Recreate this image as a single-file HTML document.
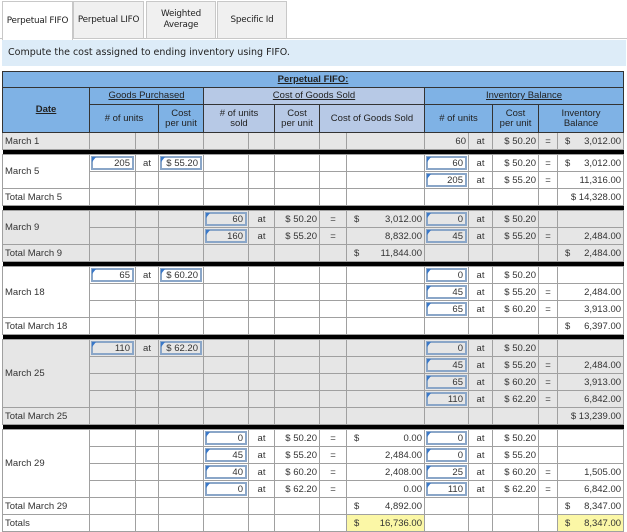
<!DOCTYPE html>
<html><head><style>
*{margin:0;padding:0;box-sizing:border-box}
body{width:627px;height:531px;background:#fff;font-family:"Liberation Sans",Arial,sans-serif;position:relative;overflow:hidden;color:#333}
.tab{position:absolute;top:1px;height:37px;border:1px solid #c8c8c8;border-bottom:none;background:#f0f0f0;font-family:"DejaVu Sans",sans-serif;font-size:8.8px;color:#222;display:flex;align-items:center;justify-content:center;text-align:center;line-height:11px;white-space:nowrap;letter-spacing:-0.2px}
.tab.act{background:#fff;height:39px;z-index:2}
.line{position:absolute;left:0;top:38px;width:627px;height:1px;background:#c8c8c8}
.instr{position:absolute;left:2px;top:40px;width:624px;height:26px;background:#ddecf8;font-family:"DejaVu Sans",sans-serif;font-size:9.5px;color:#222;padding:7px 0 0 6px}
table{position:absolute;left:2px;top:71px;border-collapse:collapse;table-layout:fixed;width:621px;font-size:9.5px}
td{border:1px solid #a0a0a0;height:17px;padding:0 2px;white-space:nowrap;overflow:hidden;position:relative}
tr.g td{background:#e6e6e6}
.h1 td,.hb{background:#7fb2e5;color:#222;text-align:center;font-weight:bold}
.hc{background:#b7c9e6!important}
.h td{text-align:center;font-weight:normal;color:#222;line-height:10px;border-color:#333}
.u{text-decoration:underline}
.r{text-align:right}
.c{text-align:center}
.bar td{height:5px;background:#000!important;border:none;padding:0}
.bl{border-left:1px solid #000!important}
.in{padding:0}
.in div{position:absolute;left:1px;right:1px;top:1px;bottom:1px;border:2px solid #8aa6c8;background:#fff;text-align:right;padding-right:2px;line-height:11px}
tr.g .in div{background:#e6e6e6}
.in div:before{content:"";position:absolute;left:-1px;top:-1px;border-top:5px solid #3a78c8;border-right:4px solid transparent}
.d{float:left;margin-left:5px}
.y{background:#fbf7a6!important}
</style></head><body>
<div class="tab act" style="left:2px;width:71px">Perpetual FIFO</div>
<div class="tab" style="left:73px;width:71px">Perpetual LIFO</div>
<div class="tab" style="left:146px;width:70px">Weighted<br>Average</div>
<div class="tab" style="left:217px;width:70px">Specific Id</div>
<div class="line"></div>
<div class="instr">Compute the cost assigned to ending inventory using FIFO.</div>
<table>
<colgroup><col style="width:87px"><col style="width:46px"><col style="width:23px"><col style="width:45px"><col style="width:45px"><col style="width:26px"><col style="width:45px"><col style="width:27px"><col style="width:78px"><col style="width:44px"><col style="width:24px"><col style="width:46px"><col style="width:19px"><col style="width:66px"></colgroup>
<tr class="h1"><td colspan="14" style="height:16px;border-color:#333"><span class="u">Perpetual FIFO:</span></td></tr>
<tr class="h"><td rowspan="2" class="hb" style="font-weight:bold"><span class="u">Date</span></td><td colspan="3" class="hb"><span class="u">Goods Purchased</span></td><td colspan="5" class="hb hc"><span class="u">Cost of Goods Sold</span></td><td colspan="5" class="hb"><span class="u">Inventory Balance</span></td></tr>
<tr class="h"><td colspan="2" class="hb" style="height:28px;font-weight:normal"># of units</td><td class="hb" style="font-weight:normal">Cost<br>per unit</td><td colspan="2" class="hb hc" style="font-weight:normal"># of units<br>sold</td><td class="hb hc" style="font-weight:normal">Cost<br>per unit</td><td colspan="2" class="hb hc" style="font-weight:normal">Cost of Goods Sold</td><td colspan="2" class="hb" style="font-weight:normal"># of units</td><td class="hb" style="font-weight:normal">Cost<br>per unit</td><td colspan="2" class="hb" style="font-weight:normal">Inventory<br>Balance</td></tr>
<tr class="g"><td>March 1</td><td class="bl"></td><td></td><td></td><td class="bl"></td><td></td><td></td><td></td><td></td><td class="r bl">60</td><td class="c">at</td><td class="r">$ 50.20</td><td class="c">=</td><td class="r"><span class="d">$</span>3,012.00</td></tr>
<tr class="bar"><td colspan="14"></td></tr>
<tr><td rowspan="2">March 5</td><td class="in bl"><div>205</div></td><td class="c">at</td><td class="in"><div>$ 55.20</div></td><td class="bl"></td><td></td><td></td><td></td><td></td><td class="in bl"><div>60</div></td><td class="c">at</td><td class="r">$ 50.20</td><td class="c">=</td><td class="r"><span class="d">$</span>3,012.00</td></tr>
<tr><td class="bl"></td><td></td><td></td><td class="bl"></td><td></td><td></td><td></td><td></td><td class="in bl"><div>205</div></td><td class="c">at</td><td class="r">$ 55.20</td><td class="c">=</td><td class="r">11,316.00</td></tr>
<tr><td>Total March 5</td><td class="bl"></td><td></td><td></td><td class="bl"></td><td></td><td></td><td></td><td></td><td class="bl"></td><td></td><td></td><td></td><td class="r">$ 14,328.00</td></tr>
<tr class="bar"><td colspan="14"></td></tr>
<tr class="g"><td rowspan="2">March 9</td><td class="bl"></td><td></td><td></td><td class="in bl"><div>60</div></td><td class="c">at</td><td class="r">$ 50.20</td><td class="c">=</td><td class="r"><span class="d">$</span>3,012.00</td><td class="in bl"><div>0</div></td><td class="c">at</td><td class="r">$ 50.20</td><td></td><td></td></tr>
<tr class="g"><td class="bl"></td><td></td><td></td><td class="in bl"><div>160</div></td><td class="c">at</td><td class="r">$ 55.20</td><td class="c">=</td><td class="r">8,832.00</td><td class="in bl"><div>45</div></td><td class="c">at</td><td class="r">$ 55.20</td><td class="c">=</td><td class="r">2,484.00</td></tr>
<tr class="g"><td>Total March 9</td><td class="bl"></td><td></td><td></td><td class="bl"></td><td></td><td></td><td></td><td class="r"><span class="d">$</span>11,844.00</td><td class="bl"></td><td></td><td></td><td></td><td class="r"><span class="d">$</span>2,484.00</td></tr>
<tr class="bar"><td colspan="14"></td></tr>
<tr><td rowspan="3">March 18</td><td class="in bl"><div>65</div></td><td class="c">at</td><td class="in"><div>$ 60.20</div></td><td class="bl"></td><td></td><td></td><td></td><td></td><td class="in bl"><div>0</div></td><td class="c">at</td><td class="r">$ 50.20</td><td></td><td></td></tr>
<tr><td class="bl"></td><td></td><td></td><td class="bl"></td><td></td><td></td><td></td><td></td><td class="in bl"><div>45</div></td><td class="c">at</td><td class="r">$ 55.20</td><td class="c">=</td><td class="r">2,484.00</td></tr>
<tr><td class="bl"></td><td></td><td></td><td class="bl"></td><td></td><td></td><td></td><td></td><td class="in bl"><div>65</div></td><td class="c">at</td><td class="r">$ 60.20</td><td class="c">=</td><td class="r">3,913.00</td></tr>
<tr><td>Total March 18</td><td class="bl"></td><td></td><td></td><td class="bl"></td><td></td><td></td><td></td><td></td><td class="bl"></td><td></td><td></td><td></td><td class="r"><span class="d">$</span>6,397.00</td></tr>
<tr class="bar"><td colspan="14"></td></tr>
<tr class="g"><td rowspan="4">March 25</td><td class="in bl"><div>110</div></td><td class="c">at</td><td class="in"><div>$ 62.20</div></td><td class="bl"></td><td></td><td></td><td></td><td></td><td class="in bl"><div>0</div></td><td class="c">at</td><td class="r">$ 50.20</td><td></td><td></td></tr>
<tr class="g"><td class="bl"></td><td></td><td></td><td class="bl"></td><td></td><td></td><td></td><td></td><td class="in bl"><div>45</div></td><td class="c">at</td><td class="r">$ 55.20</td><td class="c">=</td><td class="r">2,484.00</td></tr>
<tr class="g"><td class="bl"></td><td></td><td></td><td class="bl"></td><td></td><td></td><td></td><td></td><td class="in bl"><div>65</div></td><td class="c">at</td><td class="r">$ 60.20</td><td class="c">=</td><td class="r">3,913.00</td></tr>
<tr class="g"><td class="bl"></td><td></td><td></td><td class="bl"></td><td></td><td></td><td></td><td></td><td class="in bl"><div>110</div></td><td class="c">at</td><td class="r">$ 62.20</td><td class="c">=</td><td class="r">6,842.00</td></tr>
<tr class="g"><td>Total March 25</td><td class="bl"></td><td></td><td></td><td class="bl"></td><td></td><td></td><td></td><td></td><td class="bl"></td><td></td><td></td><td></td><td class="r">$ 13,239.00</td></tr>
<tr class="bar"><td colspan="14"></td></tr>
<tr><td rowspan="4">March 29</td><td class="bl"></td><td></td><td></td><td class="in bl"><div>0</div></td><td class="c">at</td><td class="r">$ 50.20</td><td class="c">=</td><td class="r"><span class="d">$</span>0.00</td><td class="in bl"><div>0</div></td><td class="c">at</td><td class="r">$ 50.20</td><td></td><td></td></tr>
<tr><td class="bl"></td><td></td><td></td><td class="in bl"><div>45</div></td><td class="c">at</td><td class="r">$ 55.20</td><td class="c">=</td><td class="r">2,484.00</td><td class="in bl"><div>0</div></td><td class="c">at</td><td class="r">$ 55.20</td><td></td><td></td></tr>
<tr><td class="bl"></td><td></td><td></td><td class="in bl"><div>40</div></td><td class="c">at</td><td class="r">$ 60.20</td><td class="c">=</td><td class="r">2,408.00</td><td class="in bl"><div>25</div></td><td class="c">at</td><td class="r">$ 60.20</td><td class="c">=</td><td class="r">1,505.00</td></tr>
<tr><td class="bl"></td><td></td><td></td><td class="in bl"><div>0</div></td><td class="c">at</td><td class="r">$ 62.20</td><td class="c">=</td><td class="r">0.00</td><td class="in bl"><div>110</div></td><td class="c">at</td><td class="r">$ 62.20</td><td class="c">=</td><td class="r">6,842.00</td></tr>
<tr><td>Total March 29</td><td class="bl"></td><td></td><td></td><td class="bl"></td><td></td><td></td><td></td><td class="r" style="border-top:1px solid #000"><span class="d">$</span>4,892.00</td><td class="bl"></td><td></td><td></td><td></td><td class="r" style="border-top:1px solid #000"><span class="d">$</span>8,347.00</td></tr>
<tr><td>Totals</td><td class="bl"></td><td></td><td></td><td class="bl"></td><td></td><td></td><td></td><td class="r y" style="border-top:1px solid #000"><span class="d">$</span>16,736.00</td><td class="bl"></td><td></td><td></td><td></td><td class="r y" style="border-top:1px solid #000"><span class="d">$</span>8,347.00</td></tr>
</table>
</body></html>
